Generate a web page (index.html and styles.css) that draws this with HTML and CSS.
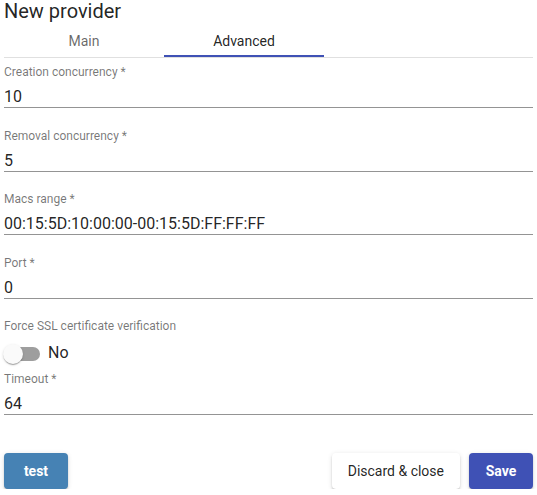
FILE: index.html
```html
<!DOCTYPE html>
<html lang="en">
<head>
<meta charset="utf-8">
<title>New provider</title>
<link rel="stylesheet" href="styles.css">
</head>
<body>
<div class="dialog">
  <h2 class="title">New provider</h2>
  <div class="tabs">
    <div class="tab">Main</div>
    <div class="tab active">Advanced</div>
  </div>
  <div class="form">
    <div class="field">
      <div class="label">Creation concurrency *</div>
      <div class="value">10</div>
    </div>
    <div class="field">
      <div class="label">Removal concurrency *</div>
      <div class="value">5</div>
    </div>
    <div class="field">
      <div class="label">Macs range *</div>
      <div class="value">00:15:5D:10:00:00-00:15:5D:FF:FF:FF</div>
    </div>
    <div class="field">
      <div class="label">Port *</div>
      <div class="value">0</div>
    </div>
    <div class="check">
      <div class="label">Force SSL certificate verification</div>
      <div class="toggle-row">
        <div class="toggle"><span class="thumb"></span></div>
        <span class="toggle-label">No</span>
      </div>
    </div>
    <div class="field">
      <div class="label">Timeout *</div>
      <div class="value">64</div>
    </div>
  </div>
  <div class="actions">
    <button class="btn btn-test">test</button>
    <div class="right">
      <button class="btn btn-discard">Discard &amp; close</button>
      <button class="btn btn-save">Save</button>
    </div>
  </div>
</div>
</body>
</html>
```
FILE: styles.css
```css
html, body {
  margin: 0;
  padding: 0;
  background: #fff;
}
body {
  font-family: Roboto, "Liberation Sans", sans-serif;
  color: rgba(0, 0, 0, 0.87);
}
.dialog {
  padding: 0 4px;
}
.title {
  margin: 0;
  font-size: 20px;
  line-height: 23px;
  font-weight: 400;
  color: rgba(0, 0, 0, 0.87);
}
.tabs {
  display: flex;
  border-bottom: 1px solid #e0e0e0;
}
.tab {
  position: relative;
  width: 160px;
  height: 32px;
  padding-top: 2px;
  line-height: 32px;
  text-align: center;
  font-size: 14px;
  color: rgba(0, 0, 0, 0.6);
}
.tab.active {
  color: rgba(0, 0, 0, 0.87);
}
.tab.active::after {
  content: "";
  position: absolute;
  left: 0;
  right: 0;
  bottom: 0;
  height: 2px;
  background: #3f51b5;
}
.form {
  padding-top: 7px;
}
.field {
  margin-bottom: 20.5px;
}
.field:last-child {
  margin-bottom: 0;
}
.label {
  font-size: 12px;
  line-height: 15px;
  color: rgba(0, 0, 0, 0.54);
}
.value {
  margin-top: 6px;
  font-size: 16px;
  line-height: 21px;
  border-bottom: 1px solid rgba(0, 0, 0, 0.42);
  color: rgba(0, 0, 0, 0.87);
}
.check {
  margin-bottom: 2px;
}
.toggle-row {
  display: flex;
  align-items: center;
  height: 32px;
  margin-top: 4px;
}
.toggle {
  position: relative;
  width: 36px;
  height: 14px;
  border-radius: 7px;
  background: #9e9e9e;
}
.thumb {
  position: absolute;
  left: -1px;
  top: -3px;
  width: 20px;
  height: 20px;
  border-radius: 50%;
  background: #fafafa;
  box-shadow: 0 2px 1px -1px rgba(0, 0, 0, 0.2), 0 1px 1px 0 rgba(0, 0, 0, 0.14), 0 1px 3px 0 rgba(0, 0, 0, 0.12);
}
.toggle-label {
  margin-left: 8px;
  font-size: 16px;
  line-height: 28px;
  padding-bottom: 3px;
  color: rgba(0, 0, 0, 0.87);
}
.actions {
  display: flex;
  justify-content: space-between;
  align-items: center;
  margin-top: 38px;
}
.right {
  display: flex;
  gap: 9px;
}
.btn {
  font-family: Roboto, "Liberation Sans", sans-serif;
  min-width: 64px;
  height: 36px;
  padding: 0 16px;
  border: none;
  border-radius: 4px;
  font-size: 14px;
  line-height: 36px;
  box-shadow: 0 3px 1px -2px rgba(0, 0, 0, 0.2), 0 2px 2px 0 rgba(0, 0, 0, 0.14), 0 1px 5px 0 rgba(0, 0, 0, 0.12);
}
.btn-test {
  background: #4682b4;
  color: #fff;
  font-weight: 700;
}
.btn-discard {
  background: #fff;
  color: rgba(0, 0, 0, 0.87);
  font-weight: 400;
}
.btn-save {
  background: #3f51b5;
  color: #fff;
  font-weight: 700;
}
```
